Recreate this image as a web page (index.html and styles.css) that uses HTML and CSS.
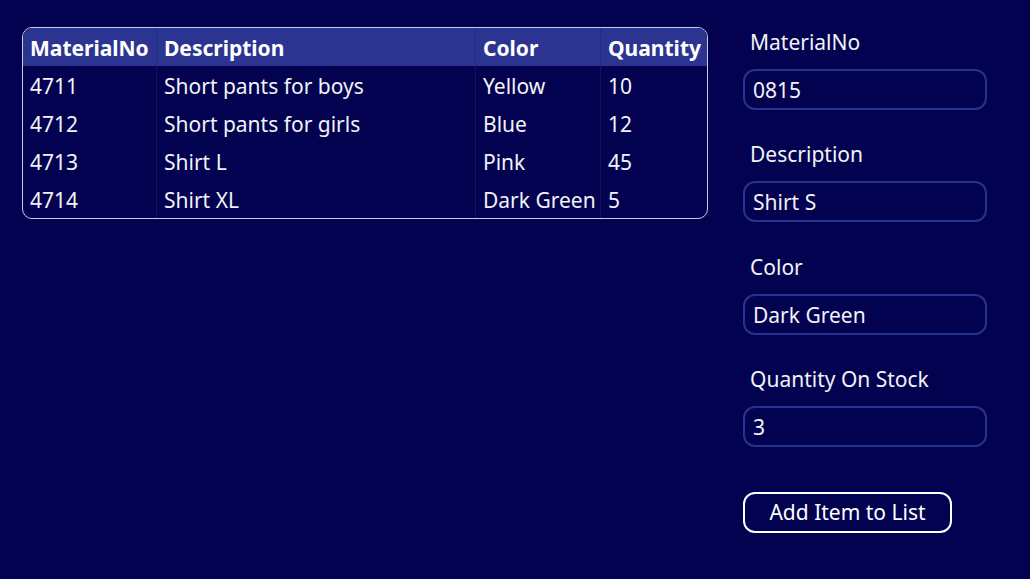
FILE: index.html
```html
<!DOCTYPE html>
<html>
<head>
<meta charset="utf-8">
<link rel="stylesheet" href="styles.css">
</head>
<body>
<div class="page">
  <div class="grid">
    <div class="row head">
      <div class="cell">MaterialNo</div>
      <div class="cell">Description</div>
      <div class="cell">Color</div>
      <div class="cell">Quantity</div>
    </div>
    <div class="row">
      <div class="cell">4711</div>
      <div class="cell">Short pants for boys</div>
      <div class="cell">Yellow</div>
      <div class="cell">10</div>
    </div>
    <div class="row">
      <div class="cell">4712</div>
      <div class="cell">Short pants for girls</div>
      <div class="cell">Blue</div>
      <div class="cell">12</div>
    </div>
    <div class="row">
      <div class="cell">4713</div>
      <div class="cell">Shirt L</div>
      <div class="cell">Pink</div>
      <div class="cell">45</div>
    </div>
    <div class="row">
      <div class="cell">4714</div>
      <div class="cell">Shirt XL</div>
      <div class="cell">Dark Green</div>
      <div class="cell">5</div>
    </div>
  </div>
  <div class="form">
    <div class="field">
      <div class="label">MaterialNo</div>
      <div class="input">0815</div>
    </div>
    <div class="field">
      <div class="label">Description</div>
      <div class="input">Shirt S</div>
    </div>
    <div class="field">
      <div class="label">Color</div>
      <div class="input">Dark Green</div>
    </div>
    <div class="field">
      <div class="label">Quantity On Stock</div>
      <div class="input">3</div>
    </div>
    <div class="button">Add Item to List</div>
  </div>
</div>
</body>
</html>
```
FILE: styles.css
```css
html, body {
  margin: 0;
  padding: 0;
  background: #020250;
  width: 1030px;
  height: 579px;
  overflow: hidden;
}
body {
  font-family: "Noto Sans", "Open Sans", sans-serif;
  font-size: 21px;
  color: #f2f2f6;
}
.page {
  display: flex;
  align-items: flex-start;
  padding: 27px 0 0 22px;
}
.grid {
  width: 684px;
  border: 1px solid #c9cbe0;
  border-radius: 10px;
  overflow: hidden;
}
.row {
  display: grid;
  grid-template-columns: 133px 319px 125px 107px;
  height: 38px;
}
.row .cell {
  display: flex;
  align-items: center;
  padding-left: 7px;
  padding-top: 1px;
  white-space: nowrap;
  border-left: 1px solid #14145e;
}
.row .cell:first-child { border-left: none; }
.head {
  height: 38px;
  background: #2b3591;
  font-weight: bold;
  color: #ffffff;
}
.head .cell { border-left-color: #232c7c; }
.form {
  margin-left: 35px;
  margin-top: 1px;
  width: 244px;
  display: flex;
  flex-direction: column;
  gap: 30.4px;
}
.label {
  height: 28px;
  line-height: 28px;
  padding-left: 7px;
  margin-bottom: 13px;
}
.input {
  box-sizing: border-box;
  height: 41px;
  border: 2px solid #263290;
  border-radius: 12px;
  padding-left: 8px;
  padding-top: 1px;
  display: flex;
  align-items: center;
}
.button {
  box-sizing: border-box;
  margin-top: 14px;
  width: 209px;
  height: 41px;
  border: 2px solid #ffffff;
  border-radius: 12px;
  display: flex;
  align-items: center;
  justify-content: center;
  color: #ffffff;
}
```
